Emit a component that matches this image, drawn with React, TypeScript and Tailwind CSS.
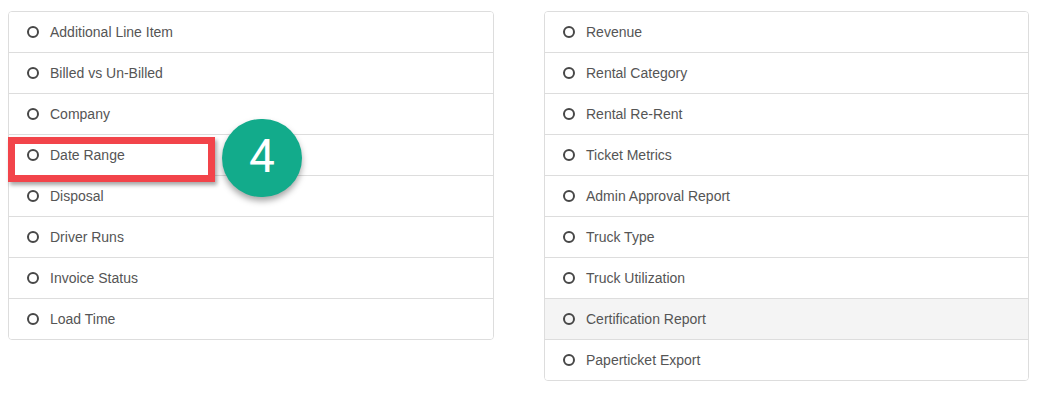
import React from 'react';

const left = [
  'Additional Line Item',
  'Billed vs Un-Billed',
  'Company',
  'Date Range',
  'Disposal',
  'Driver Runs',
  'Invoice Status',
  'Load Time',
];

const right = [
  'Revenue',
  'Rental Category',
  'Rental Re-Rent',
  'Ticket Metrics',
  'Admin Approval Report',
  'Truck Type',
  'Truck Utilization',
  'Certification Report',
  'Paperticket Export',
];

function Row({ label, active }: { label: string; active?: boolean }) {
  return (
    <div
      className={`flex h-[41px] items-center border-b border-[#dddddd] last:border-b-0 last:h-[40px] pl-[18px] ${
        active ? 'bg-[#f4f4f4]' : 'bg-white'
      }`}
    >
      <span className="w-[12px] h-[12px] rounded-full border-2 border-[#474747] shrink-0" />
      <span className="ml-[11px] text-[14px] text-[#555555] leading-none">{label}</span>
    </div>
  );
}

export default function App() {
  return (
    <div className="w-[1053px] h-[414px] bg-white font-['Liberation_Sans',Arial,sans-serif]">
      <div className="flex items-start pt-[11px] pl-[8px] gap-[50px]">
        <div className="relative w-[486px]">
          <div className="rounded border border-[#dddddd] overflow-hidden">
            {left.map((l) => (
              <Row key={l} label={l} />
            ))}
          </div>
          {/* callout marker */}
          <div className="absolute left-0 top-[126px] w-[207px] h-[45px] border-[7px] border-[#f2444a] shadow-[2px_3px_4px_rgba(0,0,0,0.35)]" />
          <div className="absolute left-[214px] top-[108px] w-[80px] h-[78px] rounded-full bg-[#12ab8b] shadow-[0_4px_6px_rgba(0,0,0,0.35)] flex items-center justify-center">
            <span className="text-white text-[46px] font-normal leading-none -mt-[5px] font-['Roboto',sans-serif]">4</span>
          </div>
        </div>
        <div className="w-[485px] rounded border border-[#dddddd] overflow-hidden">
          {right.map((r) => (
            <Row key={r} label={r} active={r === 'Certification Report'} />
          ))}
        </div>
      </div>
    </div>
  );
}
